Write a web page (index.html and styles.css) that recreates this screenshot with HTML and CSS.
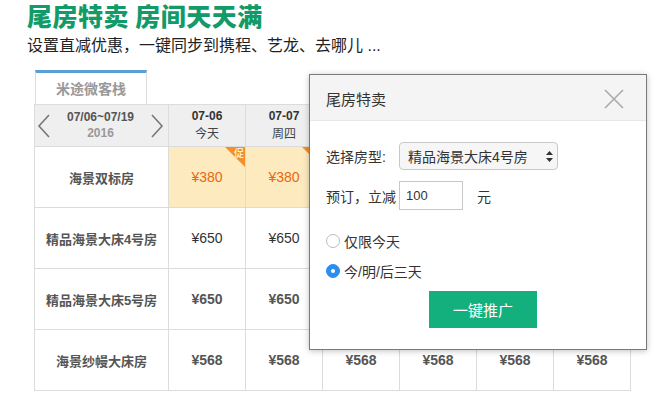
FILE: index.html
```html
<!DOCTYPE html>
<html lang="zh">
<head>
<meta charset="utf-8">
<link rel="stylesheet" href="styles.css">
</head>
<body>
<div class="page">
  <h1 class="title">尾房特卖 房间天天满</h1>
  <p class="subtitle">设置直减优惠，一键同步到携程、艺龙、去哪儿 ...</p>

  <div class="board">
    <div class="tabs"><div class="tab">米途微客栈</div></div>
    <table class="grid">
      <colgroup>
        <col class="c-name"><col class="c-day"><col class="c-day"><col class="c-day"><col class="c-day"><col class="c-day"><col class="c-day">
      </colgroup>
      <tr class="head">
        <th class="range">
          <div class="range-inner">
            <svg class="chev" width="14" height="24" viewBox="0 0 14 24"><polyline points="12,1 2,12 12,23" fill="none" stroke="#777" stroke-width="1.6"/></svg>
            <div class="range-text"><div class="rt1">07/06~07/19</div><div class="rt2">2016</div></div>
            <svg class="chev" width="14" height="24" viewBox="0 0 14 24"><polyline points="2,1 12,12 2,23" fill="none" stroke="#777" stroke-width="1.6"/></svg>
          </div>
        </th>
        <th><div class="d">07-06</div><div class="w">今天</div></th>
        <th><div class="d">07-07</div><div class="w">周四</div></th>
        <th><div class="d">07-08</div><div class="w">周五</div></th>
        <th><div class="d">07-09</div><div class="w">周六</div></th>
        <th><div class="d">07-10</div><div class="w">周日</div></th>
        <th><div class="d">07-11</div><div class="w">周一</div></th>
      </tr>
      <tr>
        <td class="name">海景双标房</td>
        <td class="promo"><span class="tag"><span>促</span></span>¥380</td>
        <td class="promo"><span class="tag"><span>促</span></span>¥380</td>
        <td class="promo"><span class="tag"><span>促</span></span>¥380</td>
        <td class="promo"><span class="tag"><span>促</span></span>¥380</td>
        <td class="promo"><span class="tag"><span>促</span></span>¥380</td>
        <td class="promo"><span class="tag"><span>促</span></span>¥380</td>
      </tr>
      <tr>
        <td class="name">精品海景大床4号房</td>
        <td>¥650</td><td>¥650</td><td>¥650</td><td>¥650</td><td>¥650</td><td>¥650</td>
      </tr>
      <tr class="strong">
        <td class="name">精品海景大床5号房</td>
        <td>¥650</td><td>¥650</td><td>¥650</td><td>¥650</td><td>¥650</td><td>¥650</td>
      </tr>
      <tr class="strong">
        <td class="name">海景纱幔大床房</td>
        <td>¥568</td><td>¥568</td><td>¥568</td><td>¥568</td><td>¥568</td><td>¥568</td>
      </tr>
    </table>

    <div class="dialog">
      <div class="dlg-head">
        <span class="dlg-title">尾房特卖</span>
        <svg class="close" width="20" height="20" viewBox="0 0 20 20"><path d="M1 1 L19 19 M19 1 L1 19" stroke="#aaa" stroke-width="1.6" fill="none"/></svg>
      </div>
      <div class="dlg-body">
        <div class="row">
          <span class="lbl">选择房型:</span>
          <div class="select">
            <span>精品海景大床4号房</span>
            <svg width="7" height="11" viewBox="0 0 7 11"><path d="M3.5 0 L7 4 L0 4 Z M3.5 11 L7 7 L0 7 Z" fill="#333"/></svg>
          </div>
        </div>
        <div class="row row2">
          <span class="lbl">预订，立减</span>
          <div class="input">100</div>
          <span class="unit">元</span>
        </div>
        <div class="radio r1"><span class="dot"></span><span class="rtxt">仅限今天</span></div>
        <div class="radio r2"><span class="dot on"></span><span class="rtxt">今/明/后三天</span></div>
        <div class="btn-wrap"><div class="btn">一键推广</div></div>
      </div>
    </div>
  </div>
</div>
</body>
</html>
```

FILE: styles.css
```css
* { box-sizing: border-box; }
html, body { margin: 0; padding: 0; background: #fff; }
body {
  font-family: "Liberation Sans", "Noto Sans CJK SC", sans-serif;
  color: #333;
  width: 668px;
  height: 400px;
  overflow: hidden;
}
.page { padding-left: 27px; }
.title {
  margin: 0;
  line-height: 30px;
  font-size: 25px;
  font-weight: 900;
  color: #139a69;
  font-family: "Noto Sans CJK SC", sans-serif;
  letter-spacing: 0.5px;
  white-space: nowrap;
}
.subtitle {
  margin: 6px 0 0;
  font-size: 16px;
  line-height: 20px;
  color: #222;
}
.board {
  position: relative;
  margin: 14px 0 0 7px;
  width: 596px;
}
.tabs { display: flex; }
.tab {
  width: 112px;
  height: 34px;
  margin-left: 1px;
  border-top: 3px solid #5a9fd6;
  border-left: 1px solid #ddd;
  border-right: 1px solid #ddd;
  color: #999;
  font-size: 14px;
  font-weight: bold;
  display: flex;
  align-items: center;
  justify-content: center;
  padding-bottom: 2px;
}
.grid {
  border-collapse: collapse;
  table-layout: fixed;
  width: 596px;
}
.c-name { width: 134px; }
.c-day { width: 77px; }
.grid th, .grid td {
  border: 1px solid #dcdcdc;
  text-align: center;
  padding: 0;
}
.head th {
  height: 42px;
  background: #efefef;
  font-weight: normal;
}
.range-inner {
  display: flex;
  align-items: center;
  justify-content: space-between;
  padding: 0 4px 0 2px;
}
.range-text { text-align: center; }
.rt1 { font-size: 12px; font-weight: bold; color: #555; line-height: 15px; }
.rt2 { font-size: 12px; font-weight: bold; color: #999; line-height: 16px; }
.d { font-size: 12px; font-weight: bold; color: #333; line-height: 16px; }
.w { font-size: 12px; color: #444; line-height: 20px; }
.grid td {
  height: 61px;
  font-size: 14px;
  color: #333;
}
.grid .strong td { font-weight: bold; color: #555; }
.grid td.name {
  font-size: 13px;
  font-weight: bold;
  color: #555;
}
.grid td.promo {
  position: relative;
  background: #fdebbf;
  color: #e8670f;
}
.tag {
  position: absolute;
  top: 0;
  right: 0;
  width: 20px;
  height: 20px;
  background: #f3902d;
  clip-path: polygon(0 0, 100% 0, 100% 100%);
}
.tag span {
  position: absolute;
  top: 0;
  right: 1px;
  font-size: 10px;
  line-height: 11px;
  color: #fff;
  font-family: "Noto Sans CJK SC", sans-serif;
}
.dialog {
  position: absolute;
  left: 275px;
  top: 4px;
  width: 338px;
  height: 276px;
  background: #fff;
  border: 1px solid #7a7a7a;
  box-shadow: 0 1px 6px rgba(0,0,0,0.25);
}
.dlg-head {
  height: 46px;
  background: #f4f4f4;
  border-bottom: 1px solid #e6e6e6;
  display: flex;
  align-items: center;
  justify-content: space-between;
  padding: 2px 22px 0 16px;
}
.dlg-title { font-size: 15px; color: #333; }
.dlg-body { padding: 21px 0 0 16px; font-size: 14px; color: #333; }
.row { display: flex; align-items: center; }
.lbl { width: 73px; white-space: nowrap; }
.select {
  width: 159px;
  height: 28px;
  border: 1px solid #c8c8c8;
  border-radius: 4px;
  background: #f6f6f6;
  display: flex;
  align-items: center;
  justify-content: space-between;
  padding: 0 4px 0 8px;
  font-size: 14px;
}
.row2 { margin-top: 11px; }
.input {
  width: 64px;
  height: 29px;
  border: 1px solid #c8c8c8;
  font-size: 13px;
  line-height: 27px;
  padding-left: 6px;
}
.unit { margin-left: 14px; }
.radio {
  display: flex;
  align-items: center;
  height: 20px;
  font-size: 14px;
}
.r1 { margin-top: 21px; }
.r2 { margin-top: 10px; }
.dot {
  flex: none;
  width: 14px;
  height: 14px;
  border-radius: 50%;
  border: 1px solid #bbb;
  background: #fff;
  margin-right: 4px;
  position: relative;
}
.dot.on { background: #2d8cf0; border-color: #2d8cf0; }
.dot.on::after {
  content: "";
  position: absolute;
  left: 4px; top: 4px;
  width: 4px; height: 4px;
  border-radius: 50%;
  background: #fff;
}
.btn-wrap { display: flex; padding-left: 103px; margin-top: 10px; }
.btn {
  width: 108px;
  height: 37px;
  background: #13b07e;
  color: #fff;
  font-size: 15px;
  display: flex;
  align-items: center;
  justify-content: center;
}
```
